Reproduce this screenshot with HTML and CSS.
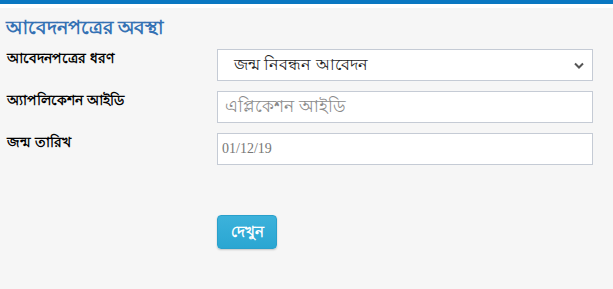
FILE: index.html
```html
<!DOCTYPE html>
<html lang="bn">
<head>
<meta charset="utf-8">
<link rel="stylesheet" href="styles.css">
</head>
<body>
<div class="topbar"></div>
<main class="panel">
  <h3 class="title">আবেদনপত্রের অবস্থা</h3>
  <form class="form">
    <div class="row">
      <label class="label">আবেদনপত্রের ধরণ</label>
      <div class="control select">
        <span class="select-text">জন্ম নিবন্ধন আবেদন</span>
        <svg class="chev" width="10" height="7" viewBox="0 0 10 7"><path d="M1 1.5 L5 5.5 L9 1.5" fill="none" stroke="#555" stroke-width="2"/></svg>
      </div>
    </div>
    <div class="row">
      <label class="label">অ্যাপলিকেশন আইডি</label>
      <div class="control input placeholder">এপ্লিকেশন আইডি</div>
    </div>
    <div class="row">
      <label class="label">জন্ম তারিখ</label>
      <div class="control input date">01/12/19</div>
    </div>
    <div class="actions">
      <button type="button" class="btn">দেখুন</button>
    </div>
  </form>
</main>
</body>
</html>
```
FILE: styles.css
```css
html, body {
  margin: 0;
  padding: 0;
}
body {
  background: #f6f6f6;
  font-family: "Liberation Sans", "Noto Sans", sans-serif;
  color: #000;
  width: 613px;
  height: 289px;
  overflow: hidden;
}
.topbar {
  height: 4px;
  border-top: 4px solid #0a78c2;
  background: #fff;
}
.panel {
  padding: 0 0 0 6px;
}
.title {
  margin: 0;
  padding-top: 8px;
  height: 32px;
  font-size: 18.5px;
  font-weight: bold;
  color: #3471b4;
  line-height: 24px;
}
.form {
  display: flex;
  flex-direction: column;
  padding-top: 1px;
}
.row {
  display: grid;
  grid-template-columns: 211px 376px;
  height: 32px;
  margin-bottom: 10px;
}
.label {
  font-size: 13.5px;
  font-weight: bold;
  line-height: 20px;
  padding-left: 1px;
}
.control {
  box-sizing: border-box;
  height: 32px;
  border: 1px solid #c5cbd5;
  background: #fff;
  display: flex;
  align-items: center;
  font-size: 16px;
}
.select {
  justify-content: space-between;
  padding: 0 8px 0 16px;
  color: #222;
}
.input {
  padding-left: 7px;
}
.placeholder {
  color: #8a8a8a;
  font-size: 16.5px;
}
.date {
  padding-left: 4px;
  font-family: "Liberation Serif", serif;
  font-size: 14px;
  color: #777;
}
.actions {
  padding-left: 211px;
  padding-top: 40px;
}
.btn {
  width: 60px;
  height: 34px;
  border: 1px solid #2aa0cb;
  border-radius: 4px;
  background: linear-gradient(#3cb2db, #2aa6d2);
  color: #fff;
  font-size: 15px;
  font-weight: bold;
  font-family: inherit;
  box-shadow: 0 1px 2px rgba(0,0,0,0.2);
  padding: 0;
}
```
